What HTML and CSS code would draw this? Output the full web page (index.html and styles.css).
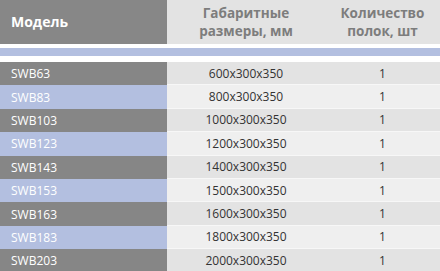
FILE: index.html
```html
<!DOCTYPE html>
<html lang="ru">
<head>
<meta charset="utf-8">
<link rel="stylesheet" href="styles.css">
</head>
<body>
<div class="table">
  <div class="head">
    <div class="h h-model">Модель</div>
    <div class="h h-size">Габаритные<br>размеры, мм</div>
    <div class="h h-qty">Количество<br>полок, шт</div>
  </div>
  <div class="band"></div>
  <div class="rows">
    <div class="row dark"><div class="c model">SWB63</div><div class="c size">600x300x350</div><div class="c qty">1</div></div>
    <div class="row blue"><div class="c model">SWB83</div><div class="c size">800x300x350</div><div class="c qty">1</div></div>
    <div class="row dark"><div class="c model">SWB103</div><div class="c size">1000x300x350</div><div class="c qty">1</div></div>
    <div class="row blue"><div class="c model">SWB123</div><div class="c size">1200x300x350</div><div class="c qty">1</div></div>
    <div class="row dark"><div class="c model">SWB143</div><div class="c size">1400x300x350</div><div class="c qty">1</div></div>
    <div class="row blue"><div class="c model">SWB153</div><div class="c size">1500x300x350</div><div class="c qty">1</div></div>
    <div class="row dark"><div class="c model">SWB163</div><div class="c size">1600x300x350</div><div class="c qty">1</div></div>
    <div class="row blue"><div class="c model">SWB183</div><div class="c size">1800x300x350</div><div class="c qty">1</div></div>
    <div class="row dark"><div class="c model">SWB203</div><div class="c size">2000x300x350</div><div class="c qty">1</div></div>
  </div>
</div>
</body>
</html>
```
FILE: styles.css
```css
html, body {
  margin: 0;
  padding: 0;
  background: #ffffff;
}
.table {
  width: 440px;
  font-family: "Open Sans", "Noto Sans", sans-serif;
}
.head {
  display: grid;
  grid-template-columns: 167px 158px 1fr;
  height: 44px;
}
.h {
  display: flex;
  align-items: center;
  font-weight: 700;
  font-size: 13.5px;
  line-height: 18px;
}
.h-model {
  background: #878787;
  color: #ffffff;
  padding-left: 11px;
  font-size: 14px;
}
.h-size, .h-qty {
  background: #e3e3e3;
  color: #7d7d7d;
  justify-content: center;
  text-align: center;
}
.band {
  height: 8px;
  margin-top: 4px;
  margin-bottom: 6px;
  background: #b3bfe0;
}
.rows {
  display: flex;
  flex-direction: column;
}
.row {
  display: grid;
  grid-template-columns: 167px 158px 1fr;
  height: 23.4px;
  font-size: 12px;
}
.c {
  display: flex;
  align-items: center;
}
.model {
  color: #ffffff;
  padding-left: 11px;
}
.size, .qty {
  justify-content: center;
  color: #333333;
  border-bottom: 1px solid #f7f7f7;
}
.dark .model { background: #868686; }
.blue .model { background: #b3bfe0; }
.dark .size, .dark .qty { background: #e3e3e3; }
.blue .size, .blue .qty { background: #efefef; }
```
